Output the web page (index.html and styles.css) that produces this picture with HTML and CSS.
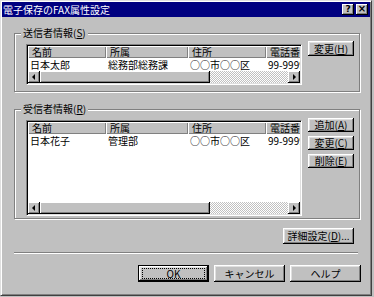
FILE: index.html
```html
<!DOCTYPE html>
<html lang="ja">
<head>
  <meta charset="UTF-8">
  <title>電子保存のFAX属性設定</title>
  <link rel="stylesheet" href="styles.css">
</head>
<body>
  <div class="window">
    <div class="titlebar">
      <span class="title">電子保存のFAX属性設定</span>
      <div class="caption-btns">
        <span class="cbtn">?</span>
        <span class="cbtn close">×</span>
      </div>
    </div>

    <div class="dialog">
      <!-- sender -->
      <div class="group sender">
        <div class="group-title">送信者情報(<u>S</u>)</div>
        <div class="group-row">
          <div class="list short">
            <div class="list-view">
              <table>
                <colgroup><col class="c1"><col class="c2"><col class="c3"><col class="c4"></colgroup>
                <thead>
                  <tr><th>名前</th><th>所属</th><th>住所</th><th>電話番号</th></tr>
                </thead>
                <tbody>
                  <tr><td>日本太郎</td><td>総務部総務課</td><td>○○市○○区</td><td>99-9999-9999</td></tr>
                </tbody>
              </table>
            </div>
            <div class="hscroll">
              <span class="arrow left"></span>
              <span class="thumb"></span>
              <span class="track"></span>
              <span class="arrow right"></span>
            </div>
          </div>
          <div class="side-btns">
            <button class="btn">変更(<u>H</u>)</button>
          </div>
        </div>
      </div>

      <!-- receiver -->
      <div class="group receiver">
        <div class="group-title">受信者情報(<u>R</u>)</div>
        <div class="group-row">
          <div class="list tall">
            <div class="list-view">
              <table>
                <colgroup><col class="c1"><col class="c2"><col class="c3"><col class="c4"></colgroup>
                <thead>
                  <tr><th>名前</th><th>所属</th><th>住所</th><th>電話番号</th></tr>
                </thead>
                <tbody>
                  <tr><td>日本花子</td><td>管理部</td><td>○○市○○区</td><td>99-9999-9999</td></tr>
                </tbody>
              </table>
            </div>
            <div class="hscroll">
              <span class="arrow left"></span>
              <span class="thumb"></span>
              <span class="track"></span>
              <span class="arrow right"></span>
            </div>
          </div>
          <div class="side-btns">
            <button class="btn">追加(<u>A</u>)</button>
            <button class="btn">変更(<u>C</u>)</button>
            <button class="btn">削除(<u>E</u>)</button>
          </div>
        </div>
      </div>

      <div class="detail-row">
        <button class="btn detail">詳細設定(<u>D</u>)...</button>
      </div>

      <div class="separator"></div>

      <div class="footer">
        <button class="btn wide default"><span class="focus">OK</span></button>
        <button class="btn wide">キャンセル</button>
        <button class="btn wide">ヘルプ</button>
      </div>
    </div>
  </div>
</body>
</html>
```

FILE: styles.css
```css
body {
  margin: 0;
  background: #c0c0c0;
  font-family: "Noto Sans CJK JP", "DejaVu Sans", sans-serif;
  font-size: 10px;
  color: #000;
}
.window {
  box-sizing: border-box;
  width: 372px;
  height: 296px;
  background: #c0c0c0;
  border-top: 1px solid #dfdfdf;
  border-left: 1px solid #dfdfdf;
  border-right: 1px solid #404040;
  border-bottom: 1px solid #404040;
  box-shadow: inset 1px 1px #fff, inset -1px -1px #808080;
  padding: 1px;
}
.titlebar {
  height: 15px;
  background: #000080;
  color: #fff;
  display: flex;
  align-items: center;
  justify-content: space-between;
  padding: 0 2px 0 1px;
}
.title {
  line-height: 15px;
  white-space: nowrap;
}
.caption-btns {
  display: flex;
  gap: 2px;
}
.cbtn {
  box-sizing: border-box;
  width: 12px;
  height: 11px;
  background: #c0c0c0;
  color: #000;
  font-family: "DejaVu Sans", sans-serif;
  font-weight: bold;
  font-size: 9px;
  line-height: 10px;
  text-align: center;
  box-shadow: inset -1px -1px #000, inset 1px 1px #fff, inset -2px -2px #808080;
}
.cbtn.close {
  font-size: 10px;
}

.dialog {
  padding: 16px 10px 0 12px;
}

/* group boxes */
.group {
  box-sizing: border-box;
  border: 1px solid #808080;
  box-shadow: 1px 1px 0 #fff, inset 1px 1px 0 #fff;
  padding: 0 5px 0 11px;
}
.group-title {
  width: fit-content;
  margin: -7px 0 0 -5px;
  padding: 0 2px;
  background: #c0c0c0;
  line-height: 12px;
  white-space: nowrap;
}
.sender {
  height: 59px;
}
.receiver {
  height: 110px;
  margin-top: 17px;
}
.group-row {
  display: flex;
  gap: 6px;
  margin-top: 5px;
}

/* list view */
.list {
  box-sizing: border-box;
  width: 276px;
  display: flex;
  flex-direction: column;
  border-top: 1px solid #808080;
  border-left: 1px solid #808080;
  border-right: 1px solid #fff;
  border-bottom: 1px solid #fff;
  box-shadow: inset 1px 1px #000, inset -1px -1px #dfdfdf;
  padding: 1px;
  background: #fff;
}
.list.short {
  height: 41px;
}
.list.tall {
  height: 96px;
}
.list-view {
  flex: 1;
  overflow: hidden;
}
table {
  border-collapse: collapse;
  table-layout: fixed;
  width: 318px;
}
.c1 { width: 78px; }
.c2 { width: 82px; }
.c3 { width: 78px; }
.c4 { width: 80px; }
th {
  height: 12px;
  padding: 0 0 0 4px;
  font-weight: normal;
  text-align: left;
  line-height: 12px;
  background: #c0c0c0;
  box-shadow: inset 1px 1px #fff, inset -1px -1px #808080;
  white-space: nowrap;
}
td {
  height: 13px;
  padding: 0 0 0 2px;
  line-height: 13px;
  white-space: nowrap;
}

/* horizontal scrollbar */
.hscroll {
  display: flex;
  height: 12px;
}
.arrow,
.thumb {
  box-sizing: border-box;
  background: #c0c0c0;
  box-shadow: inset -1px -1px #000, inset 1px 1px #fff, inset -2px -2px #808080;
}
.arrow {
  width: 12px;
  position: relative;
}
.arrow::after {
  content: "";
  position: absolute;
  top: 3px;
  border-top: 3px solid transparent;
  border-bottom: 3px solid transparent;
}
.arrow.left::after {
  left: 4px;
  border-right: 3px solid #000;
}
.arrow.right::after {
  left: 5px;
  border-left: 3px solid #000;
}
.thumb {
  width: 170px;
}
.track {
  flex: 1;
  background: repeating-conic-gradient(#fff 0 25%, #c0c0c0 0 50%) 0 0 / 2px 2px;
}

/* buttons */
.btn {
  box-sizing: border-box;
  font-family: inherit;
  font-size: 10px;
  color: #000;
  background: #c0c0c0;
  border: none;
  padding: 0;
  line-height: 12px;
  box-shadow: inset -1px -1px #000, inset 1px 1px #fff, inset -2px -2px #808080, inset 2px 2px #dfdfdf;
}
.side-btns {
  display: flex;
  flex-direction: column;
  gap: 4px;
  margin-top: -2px;
}
.side-btns .btn {
  width: 46px;
  height: 14px;
}
.sender .side-btns {
  margin-top: -3px;
}
.sender .side-btns .btn {
  height: 15px;
}

.detail-row {
  display: flex;
  justify-content: flex-end;
  padding: 9px 6px 0 0;
}
.btn.detail {
  width: 71px;
  height: 16px;
}
.separator {
  height: 1px;
  margin: 8px 2px 0 0;
  background: #808080;
  border-bottom: 1px solid #fff;
}
.footer {
  display: flex;
  justify-content: flex-end;
  gap: 5px;
  margin: 11px -1px 0 0;
}
.btn.wide {
  width: 71px;
  height: 17px;
}
.btn.default {
  border: 1px solid #000;
  box-shadow: inset -1px -1px #000, inset 1px 1px #fff, inset -2px -2px #808080, inset 2px 2px #dfdfdf;
  padding: 3px 4px;
}
.focus {
  display: block;
  height: 100%;
  box-sizing: border-box;
  outline: 1px dotted #000;
  line-height: 9px;
}
```
